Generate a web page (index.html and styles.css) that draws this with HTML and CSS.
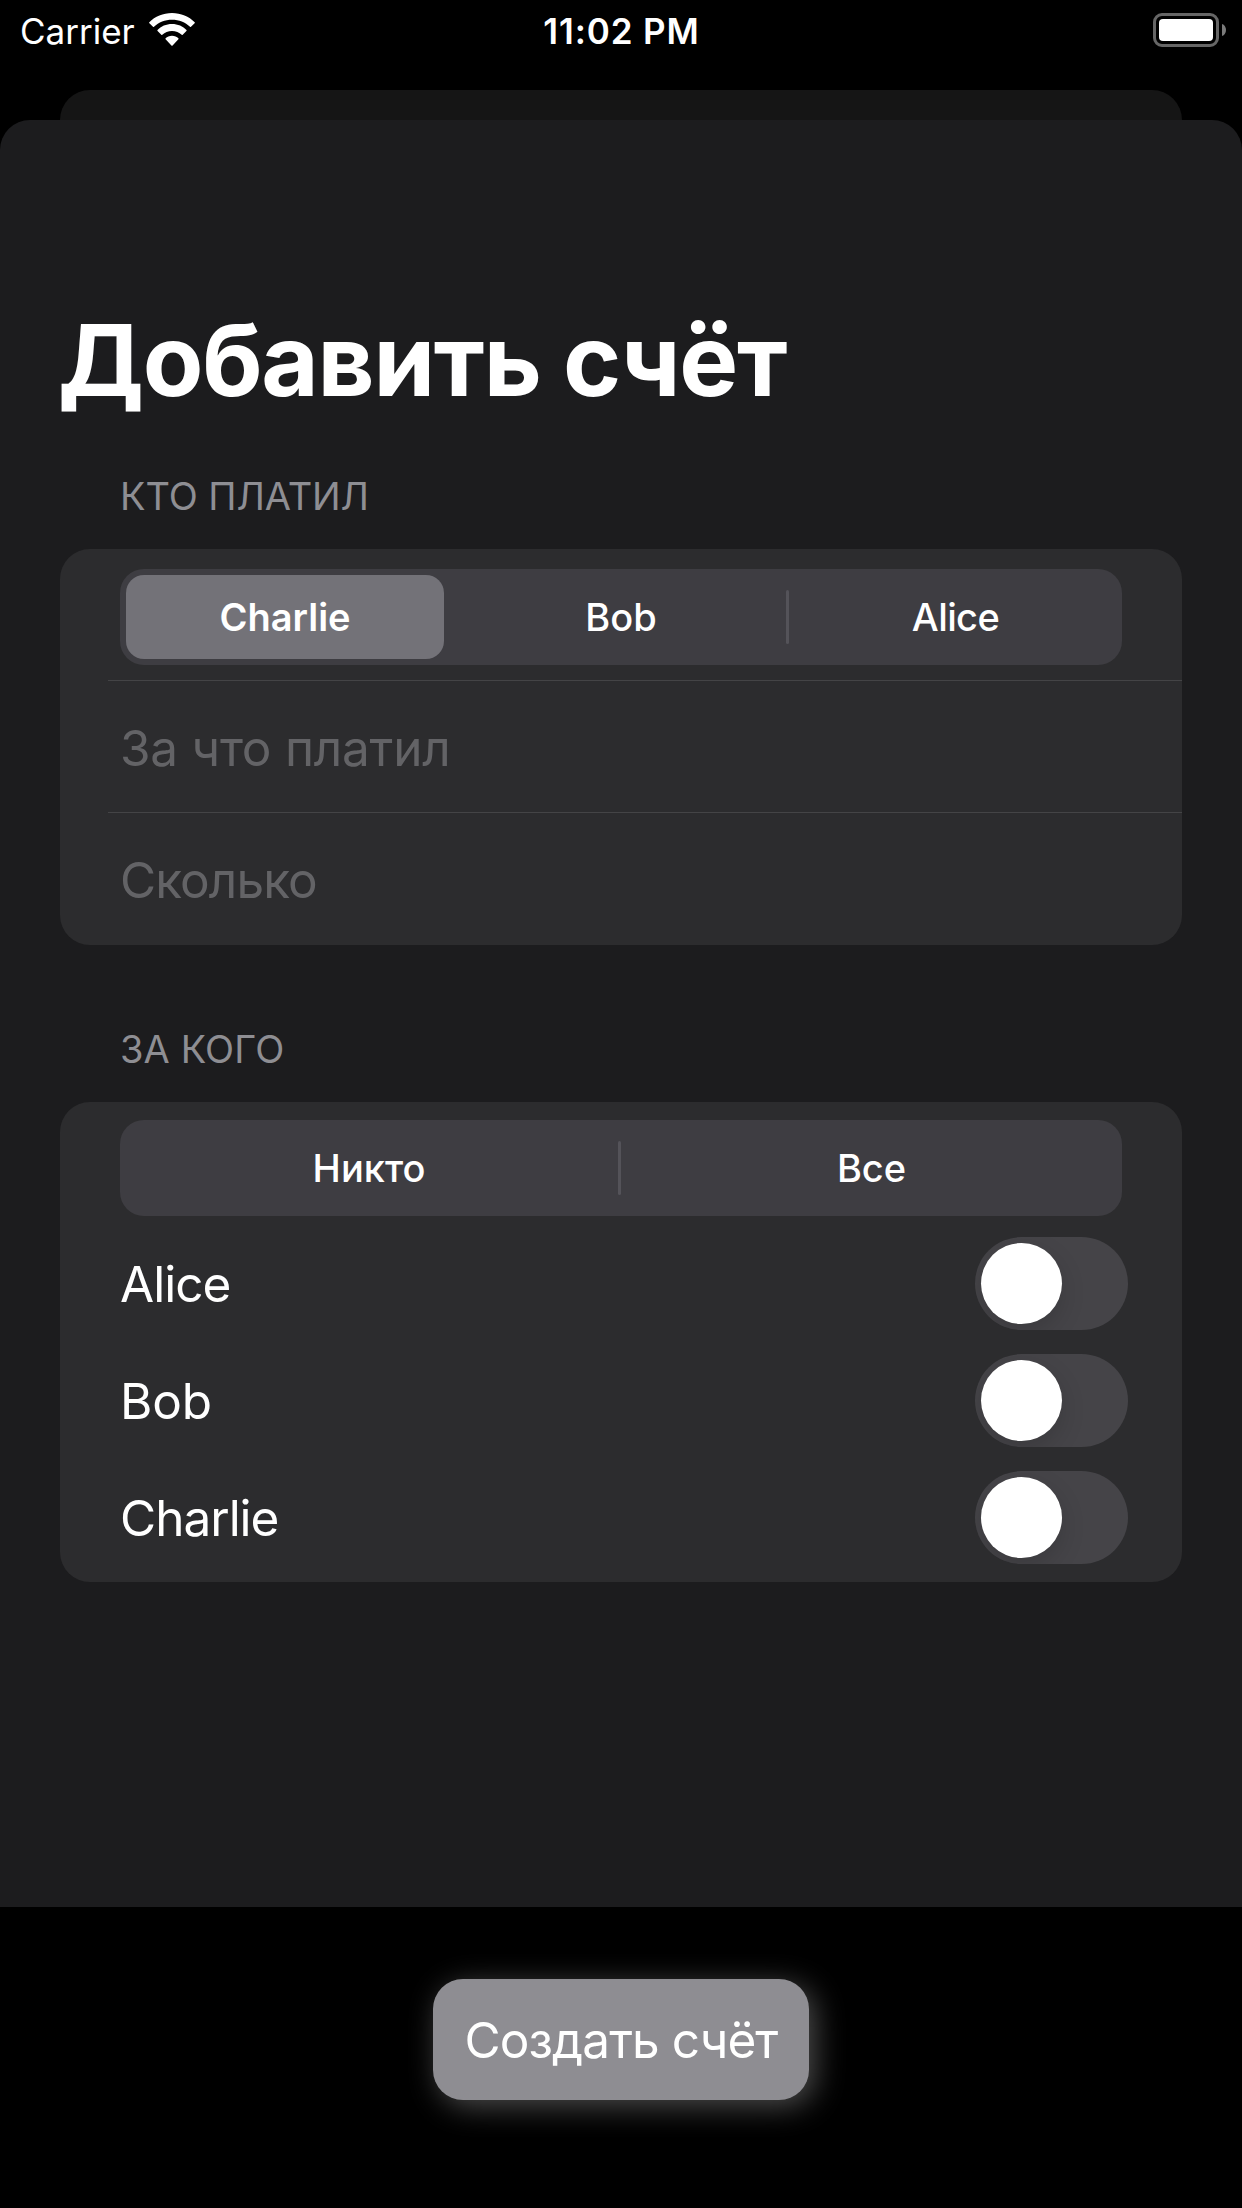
FILE: index.html
```html
<!DOCTYPE html>
<html lang="ru">
<head>
<meta charset="utf-8">
<title>Добавить счёт</title>
<link rel="stylesheet" href="styles.css">
</head>
<body>
<header class="status">
  <div class="status-left">
    <span class="carrier">Carrier</span>
    <svg class="wifi" width="46" height="34" viewBox="0 0 46 34" fill="#fff">
      <path d="M23 0C31.900 0 40 3.500 45.700 9.200Q46.100 9.700 45.600 10.200L42 13.800Q41.500 14.200 41 13.800C36.300 9.400 30 6.800 23 6.800S9.700 9.400 5 13.800Q4.500 14.200 4 13.800L.4 10.200Q-.1 9.700 .3 9.200C6 3.500 14.100 0 23 0Z"/>
      <path d="M23 11C28.800 11 34 13.300 37.500 17.100Q37.900 17.600 37.400 18.100L33.700 21.800Q33.200 22.200 32.700 21.800C30.200 19.400 26.800 18 23 18S15.800 19.400 13.300 21.800Q12.800 22.200 12.300 21.800L8.600 18.100Q8.100 17.600 8.500 17.100C12 13.300 17.200 11 23 11Z"/>
      <path d="M23 22.800C25.600 22.800 27.900 23.800 29.400 25.300Q29.800 25.800 29.400 26.200L23.600 32.500Q23 33 22.400 32.500L16.600 26.200Q16.200 25.800 16.600 25.300C18.100 23.800 20.400 22.800 23 22.800Z"/>
    </svg>
  </div>
  <span class="time">11:02 PM</span>
  <svg class="battery" width="74" height="34" viewBox="0 0 74 34">
    <rect x="1.500" y="1.500" width="63" height="31" rx="7.500" fill="none" stroke="#666" stroke-width="3"/>
    <rect x="6" y="6" width="54" height="22" rx="4" fill="#fff"/>
    <path d="M69 11C71.500 11.800 73 14 73 17S71.500 22.200 69 23Z" fill="#7a7a7a"/>
  </svg>
</header>
<div class="sheet-behind"></div>
<main class="sheet">
  <h1 class="title">Добавить счёт</h1>
  <h2 class="caption">КТО ПЛАТИЛ</h2>
  <section class="card payment">
    <div class="segmented three">
      <div class="segment selected">Charlie</div>
      <i class="divider hidden"></i>
      <div class="segment">Bob</div>
      <i class="divider"></i>
      <div class="segment tight">Alice</div>
    </div>
    <div class="field">За что платил</div>
    <div class="field amount">Сколько</div>
  </section>
  <h2 class="caption second">ЗА КОГО</h2>
  <section class="card people">
    <div class="segmented two">
      <div class="segment">Никто</div>
      <i class="divider"></i>
      <div class="segment">Все</div>
    </div>
    <div class="person"><span class="name">Alice</span><div class="switch"><i class="knob"></i></div></div>
    <div class="person"><span class="name short">Bob</span><div class="switch"><i class="knob"></i></div></div>
    <div class="person"><span class="name">Charlie</span><div class="switch"><i class="knob"></i></div></div>
  </section>
</main>
<footer class="footer"><button class="create">Создать счёт</button></footer>
</body>
</html>
```
FILE: styles.css
```css
* { box-sizing: border-box; }
body {
  margin: 0;
  width: 1242px;
  height: 2208px;
  display: flex;
  flex-direction: column;
  overflow: hidden;
  background: #000;
  color: #fff;
  font-family: Inter, "Liberation Sans", sans-serif;
}
h1, h2 { margin: 0; }

/* Status bar */
.status {
  height: 90px;
  display: grid;
  grid-template-columns: 1fr auto 1fr;
  align-items: start;
  padding: 13px 15px 0 20px;
}
.status-left { display: flex; gap: 14px; }
.carrier, .time { font-size: 35px; line-height: 37px; white-space: nowrap; }
.time { font-weight: 600; letter-spacing: 0.9px; margin-right: 4px; }
.battery { justify-self: end; }

/* Sheets */
.sheet-behind { height: 30px; margin: 0 60px; background: #151515; border-radius: 30px 30px 0 0; }
.sheet {
  height: 1787px;
  padding: 180px 60px 0;
  background: #1c1c1e;
  border-radius: 30px 30px 0 0;
}
.title {
  margin-left: -2px;
  font-size: 99px;
  line-height: 120px;
  font-weight: 700;
  letter-spacing: -1.25px;
  white-space: nowrap;
}
.caption {
  margin: 52px 0 0 60px;
  font-size: 38px;
  line-height: 48px;
  font-weight: 400;
  letter-spacing: -0.1px;
  color: #8e8e93;
}
.caption.second { margin-top: 80px; letter-spacing: 0.1px; }
.card { background: #2c2c2e; border-radius: 30px; }
.payment { margin-top: 29px; height: 396px; padding-top: 20px; }
.people { margin-top: 29px; height: 480px; padding-top: 18px; }

/* Segmented control */
.segmented {
  height: 96px;
  margin: 0 60px;
  display: grid;
  align-items: center;
  background: #3e3d42;
  border-radius: 24px;
  font-size: 38px;
  font-weight: 500;
}
.three { grid-template-columns: 333px 3px 330px 3px 333px; }
.two { grid-template-columns: 498px 3px 501px; }
.segment { height: 84px; line-height: 84px; text-align: center; }
.segment.tight { letter-spacing: -0.6px; }
.segment.selected {
  margin: 0 9px 0 6px;
  background: #737278;
  border-radius: 18px;
  font-weight: 600;
}
.divider { height: 54px; border-radius: 2px; background: #545359; }
.divider.hidden { visibility: hidden; }

/* Text fields */
.field {
  height: 132px;
  margin-left: 48px;
  padding-left: 12px;
  border-top: 1px solid #444446;
  font-size: 49.5px;
  line-height: 134px;
  letter-spacing: -0.25px;
  color: #636366;
}
.field.amount { letter-spacing: -0.9px; }
.segmented + .field { margin-top: 15px; }

/* People */
.person {
  height: 117px;
  padding: 0 54px 0 60px;
  display: flex;
  align-items: center;
  justify-content: space-between;
  font-size: 49.5px;
}
.segmented + .person { margin-top: 9px; }
.name { letter-spacing: -1px; }
.name.short { letter-spacing: -0.2px; }
.switch {
  width: 153px;
  height: 93px;
  padding: 6px;
  overflow: hidden;
  border-radius: 47px;
  background: #454448;
}
.knob {
  display: block;
  width: 81px;
  height: 81px;
  border-radius: 50%;
  background: #fff;
  box-shadow: 0 9px 24px rgba(0, 0, 0, 0.15);
}

/* Footer */
.footer {
  height: 301px;
  padding-top: 72px;
  display: flex;
  justify-content: center;
  align-items: flex-start;
}
.create {
  width: 376px;
  height: 121px;
  padding: 1px 0 0;
  border: 0;
  border-radius: 30px;
  background: #8e8d92;
  color: #fff;
  font: 400 49.5px/120px Inter, "Liberation Sans", sans-serif;
  letter-spacing: -0.9px;
  box-shadow: 6px 6px 30px rgba(255, 255, 255, 0.3);
}
```
